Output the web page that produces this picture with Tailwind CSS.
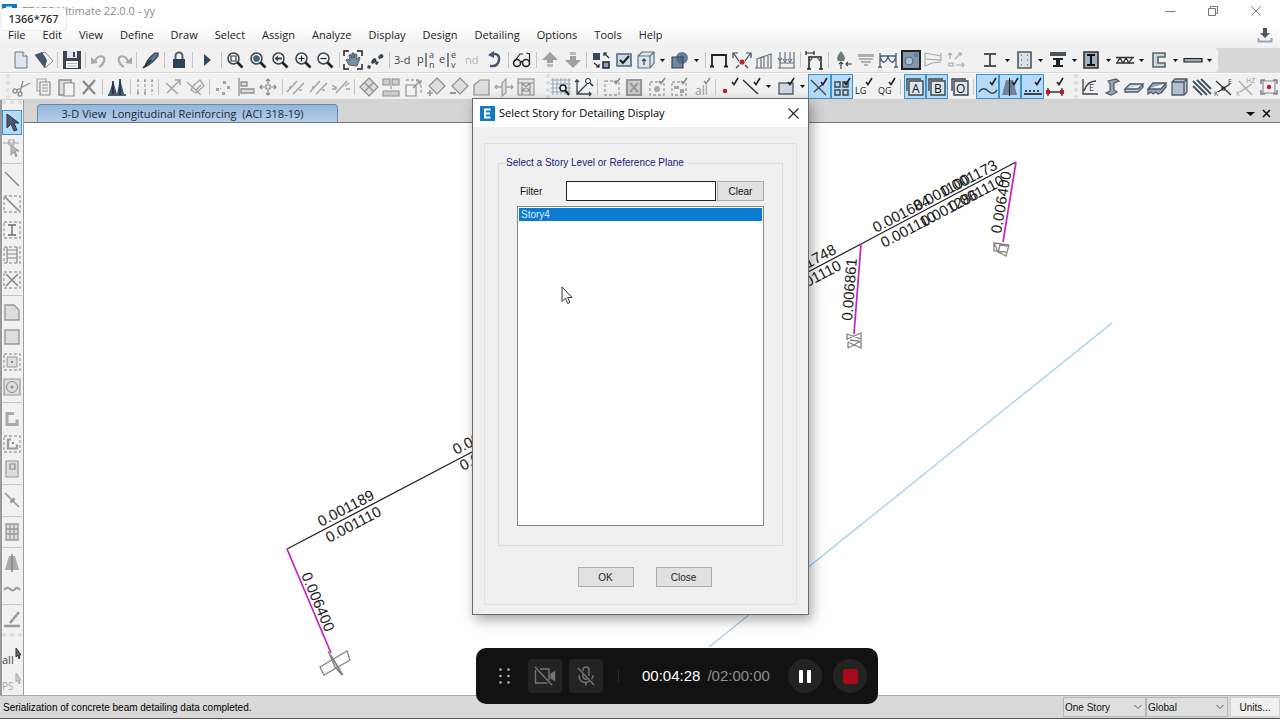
<!DOCTYPE html>
<html lang="en">
<head>
  <meta charset="UTF-8" />
  <meta name="viewport" content="width=device-width, initial-scale=1.0"/>
  <title>ETABS Ultimate 22.0.0 - yy</title>
  <script src="https://cdn.jsdelivr.net/npm/@tailwindcss/browser@4"></script>
</head>
<body class="relative h-screen flex flex-col overflow-hidden bg-white text-[#222] font-['Open_Sans','Noto_Sans',sans-serif] text-[11px]">

  <!-- Title bar and menu -->
  <header class="bg-linear-to-b from-white from-50% to-[#f0f0f0]">
    <div class="flex items-center h-[22px] pl-[2px]">
      <svg class="w-[15px] h-[15px]" viewBox="0 0 15 15"><path d="M0 0h15v15H0z" fill="#0f7ac4"/><path d="M10 3.500H5v8h5M5 7.500h4" stroke="#fff" stroke-width="2" fill="none"/></svg>
      <h1 class="pl-[5px] text-[#8b8b8b]">ETABS Ultimate 22.0.0 - yy</h1>
      <div class="ml-auto mr-[3px] flex text-[#777]">
        <button aria-label="Minimize" class="w-[43px] h-[20px] flex items-center justify-center"><svg class="w-[10px] h-[10px]" viewBox="0 0 10 10"><path d="M0 5.500h10" stroke="currentColor"/></svg></button>
        <button aria-label="Restore" class="w-[43px] h-[20px] flex items-center justify-center"><svg class="w-[10px] h-[10px]" viewBox="0 0 10 10" fill="none" stroke="currentColor"><path d="M.5 2.500h7v7h-7zM2.500 2V.5h7v7H8"/></svg></button>
        <button aria-label="Close window" class="w-[43px] h-[20px] flex items-center justify-center"><svg class="w-[10px] h-[10px]" viewBox="0 0 10 10"><path d="M.5.5l9 9M9.500.5l-9 9" stroke="currentColor"/></svg></button>
      </div>
    </div>
    <div class="flex items-center h-[26px] pl-[8px] pr-[7px]">
      <nav id="menu" class="flex gap-[17px] leading-[16px]"></nav>
      <button aria-label="Download" class="ml-auto"><svg class="w-[16px] h-[16px]" viewBox="0 0 16 16"><path d="M6 1h4v5h3L8 11 3 6h3z" fill="#4a5866"/><path d="M1.500 11v3.500h13V11" fill="none" stroke="#9aa7b3" stroke-width="2"/></svg></button>
    </div>
  </header>

  <!-- Toolbars -->
  <div class="flex h-[26px] bg-[#d7d7d7] border-b border-[#fafafa]">
    <div class="grow-[977] basis-0 min-w-0 flex bg-[#f1f1f1] pl-[10px] pr-[8px] border-b border-[#d9d9d9]">
      <div data-bar="main" class="grow flex"></div>
      <div class="w-[4px]"></div>
    </div>
    <div class="grow-[240] basis-0 min-w-0 flex bg-[#f1f1f1] rounded-r-sm pr-[3px] border-b border-[#d9d9d9]">
      <div data-bar="design" class="grow flex"></div>
    </div>
    <div class="grow-[63] basis-0"></div>
  </div>
  <div class="flex h-[26px] bg-[#f1f1f1] border-b border-[#d0d0d0]">
    <div class="shrink-0 w-[10px] border-r-4 border-dotted border-[#e2e2e2]"></div>
    <div data-bar="edit" class="grow-[528] basis-0 min-w-0 flex"></div>
    <div class="shrink-0 w-[13px] border-r-4 border-dotted border-[#dcdcdc]"></div>
    <div data-bar="view" class="grow-[517] basis-0 min-w-0 flex"></div>
    <div class="shrink-0 w-[12px] border-r-4 border-dotted border-[#dcdcdc]"></div>
    <div data-bar="detail" class="grow-[202] basis-0 min-w-0 flex"></div>
  </div>

  <div class="flex grow min-h-0">
    <!-- Drawing tools -->
    <aside class="w-[24px] flex flex-col pr-[1px] bg-[#f1f1f1] border-l-2 border-l-[#9a9a9a] border-r border-r-[#9c9c9c]">
      <div class="h-[10px] border-t-4 border-dotted border-[#dcdcdc]"></div>
      <div data-bar="draw" class="grow-[83] basis-0 min-h-0 flex flex-col"></div>
      <div class="h-[12px] border-t-4 border-dotted border-[#dcdcdc]"></div>
      <div data-bar="pick" class="grow-[8] basis-0 min-h-0 flex flex-col"></div>
    </aside>

    <main class="grow min-w-0 flex flex-col">
      <div class="h-[23px] flex items-end bg-[#d4d4d4] border-b border-[#777] pl-[13px] pr-[9px]">
        <button class="w-[301px] h-[18px] pr-[10px] rounded-t-[4px] border border-b-0 border-[#6f86a0] bg-linear-to-b from-[#93b5da] to-[#b4cfec] text-[#1b2733] leading-[16px] whitespace-pre">3-D View  Longitudinal Reinforcing  (ACI 318-19)</button>
        <button aria-label="Window list" class="ml-auto mb-[4px]"><svg class="w-[9px] h-[9px]" viewBox="0 0 9 9"><path d="M0 3h9L4.500 7z" fill="#111"/></svg></button>
        <button aria-label="Close view" class="ml-[7px] mb-[4px]"><svg class="w-[9px] h-[9px]" viewBox="0 0 9 9"><path d="M1 1l7 7M8 1L1 8" stroke="#111" stroke-width="1.600"/></svg></button>
      </div>

      <!-- Model view -->
      <div class="grow min-h-0 overflow-hidden bg-white">
        <svg class="w-full h-full" viewBox="24 123 1256 572" preserveAspectRatio="xMinYMin slice" fill="none">
          <path d="M1112 323L709 647" stroke="#9ccbea" stroke-width="1.200"/>
          <path d="M287 549L472 452M808 272L861 244L1016 162" stroke="#222" stroke-width="1.300"/>
          <path d="M287 549L331 653M861 244L854 334M1016 162L1003 242" stroke="#c81ec8" stroke-width="1.700"/>
          <g stroke="#858585" stroke-width="1.300">
            <path d="M320 667l27-16 3 9-26 15zM328 651l14 24-7-8zM331 655l12 20"/>
            <path d="M847 334l14 5v-6l-14 6zM847 334v6M861 333v13M848 348l13-7M848 342l13 6v-7M848 342v6M850 340l9 1"/>
            <path d="M994 243l15 2-3 11-8-4zM994 243v8l12 1M998 253l2-8 9 1"/>
          </g>
          <g id="labels" fill="#1a1a1a" font-family="Liberation Sans, sans-serif" font-size="15"></g>
        </svg>
      </div>
    </main>
  </div>

  <!-- Status bar -->
  <footer class="flex items-center h-[25px] pb-[2px] bg-[#d9d9d9] border-t border-[#a8a8a8] font-['Liberation_Sans',sans-serif] text-[10px]">
    <p class="pl-[3px] text-black">Serialization of concrete beam detailing data completed.</p>
    <div class="ml-auto flex h-[20px] text-[#111]">
      <label class="relative flex" aria-label="Story mode">
        <select class="appearance-none w-[83px] pl-[1px] border border-[#b5b5b5] bg-[#dfdfdf]"><option>One Story</option></select>
        <svg class="absolute right-[4px] top-[7px] w-[8px] h-[6px]" viewBox="0 0 8 6"><path d="M.5 1L4 4.500 7.500 1" fill="none" stroke="#555"/></svg>
      </label>
      <label class="relative flex" aria-label="Coordinate system">
        <select class="appearance-none w-[82px] pl-[1px] border border-[#b5b5b5] bg-[#dfdfdf]"><option>Global</option></select>
        <svg class="absolute right-[4px] top-[7px] w-[8px] h-[6px]" viewBox="0 0 8 6"><path d="M.5 1L4 4.500 7.500 1" fill="none" stroke="#555"/></svg>
      </label>
      <button class="w-[50px] ml-[2px] bg-[#f0f0f0] border border-[#d0d0d0]">Units...</button>
    </div>
  </footer>
  <div class="h-[2px] border-t border-[#555] bg-white -mt-[2px]"></div>

  <!-- Story dialog -->
  <section role="dialog" aria-labelledby="dlg-title" class="absolute left-[472px] top-[98px] w-[337px] border border-[#686c70] bg-[#f0f0f0] shadow-[3px_5px_12px_rgba(0,0,0,0.35)]">
    <div class="flex items-center h-[28px] bg-white pl-[7px] pr-[9px]">
      <svg class="w-[15px] h-[15px]" viewBox="0 0 15 15"><path d="M0 0h15v15H0z" fill="#1279c6"/><path d="M10.500 3.500H5v8h5.500M5 7.500h5" stroke="#fff" stroke-width="2" fill="none"/></svg>
      <h2 id="dlg-title" class="pl-[4px] text-black">Select Story for Detailing Display</h2>
      <button aria-label="Close dialog" class="ml-auto"><svg class="w-[11px] h-[11px]" viewBox="0 0 11 11"><path d="M.5.5l10 10M10.500.5l-10 10" stroke="#222" stroke-width="1.100"/></svg></button>
    </div>
    <div class="mt-[16px] mx-[11px] mb-[9px] px-[13px] pt-[11px] pb-[17px] border border-[#e2e2e2] font-['Liberation_Sans',sans-serif] text-[10px]">
      <fieldset class="border border-[#dcdcdc] px-[18px] pt-[10px] pb-[19px]">
        <legend class="-ml-[12px] pl-[1px] pr-[4px] leading-[16px] text-[#1a1a80]">Select a Story Level or Reference Plane</legend>
        <div class="flex items-center h-[20px] text-[#111]">
          <label for="filter" class="w-[49px] pl-[3px]">Filter</label>
          <input id="filter" type="text" class="grow min-w-0 h-[20px] px-[3px] bg-white border border-[#222]" />
          <button id="clear" class="w-[47px] h-[20px] ml-[1px] bg-[#e1e1e1] border border-[#adadad]">Clear</button>
        </div>
        <ul role="listbox" aria-label="Stories" class="mt-[5px] h-[320px] p-[1px] bg-white border border-[#82878c]">
          <li role="option" aria-selected="true" class="h-[13px] pl-[2px] leading-[13px] bg-[#0b7ad1] text-[#dceeff]">Story4</li>
        </ul>
      </fieldset>
      <div class="flex justify-center gap-[22px] mt-[21px] pl-[8px]">
        <button class="w-[56px] h-[20px] bg-[#e1e1e1] border border-[#adadad]">OK</button>
        <button class="w-[56px] h-[20px] bg-[#e1e1e1] border border-[#adadad]">Close</button>
      </div>
    </div>
  </section>

  <!-- Recorder overlay -->
  <section aria-label="Recorder" class="absolute left-[476px] top-[648px] w-[402px] h-[56px] flex items-center pl-[23px] pr-[11px] rounded-[10px] bg-[#121212] font-['Liberation_Sans',sans-serif] text-[15px]">
    <svg class="w-[11px] h-[16px]" viewBox="0 0 11 16" fill="#b0b0b0"><circle cx="1.500" cy="1.500" r="1.300"/><circle cx="9.500" cy="1.500" r="1.300"/><circle cx="1.500" cy="8" r="1.300"/><circle cx="9.500" cy="8" r="1.300"/><circle cx="1.500" cy="14.500" r="1.300"/><circle cx="9.500" cy="14.500" r="1.300"/></svg>
    <button aria-label="Camera off" class="ml-[18px] w-[34px] h-[34px] rounded-[4px] bg-[#232323] flex items-center justify-center">
      <svg class="w-[22px] h-[20px]" viewBox="0 0 22 20" fill="none" stroke="#757575" stroke-width="1.400"><path d="M6 3h9v11M13.500 17H1.500V4M1 1l17 18"/><path d="M17 8l3.500-2v8L17 12z" fill="#757575"/></svg>
    </button>
    <button aria-label="Microphone off" class="ml-[7px] w-[34px] h-[34px] rounded-[4px] bg-[#232323] flex items-center justify-center">
      <svg class="w-[18px] h-[20px]" viewBox="0 0 18 20" fill="none" stroke="#757575" stroke-width="1.400"><path d="M6 5V4a3 3 0 0 1 6 0v6M6 7v3a3 3 0 0 0 4 3M2 9c0 9 8 8 10 6M16 9c0 2-.5 3-1.500 4M9 16v3.500M1 2l16 17"/></svg>
    </button>
    <span class="ml-[15px] w-[1px] h-[12px] bg-[#2a2a2a]"></span>
    <span class="ml-[23px] text-white">00:04:28</span>
    <span class="ml-[7px] text-[#8f8f8f]">/02:00:00</span>
    <button aria-label="Pause" class="ml-auto w-[34px] h-[34px] rounded-full bg-[#232323] flex items-center justify-center gap-[4px]">
      <span class="w-[4px] h-[13px] rounded-[1px] bg-white"></span><span class="w-[4px] h-[13px] rounded-[1px] bg-white"></span>
    </button>
    <button aria-label="Stop" class="ml-[11px] w-[34px] h-[34px] rounded-full bg-[#232323] flex items-center justify-center">
      <span class="w-[15px] h-[15px] rounded-[3px] bg-[#a80b1c]"></span>
    </button>
  </section>

  <div class="absolute left-[1px] top-[8px] w-[65px] h-[22px] rounded-[4px] bg-white shadow-[0_0_2px_rgba(0,0,0,0.25)] text-center leading-[22px] text-[11px] font-semibold text-[#333]">1366*767</div>

  <!-- Mouse pointer -->
  <svg class="absolute left-[561px] top-[286px] w-[12px] h-[19px]" viewBox="0 0 12 19"><path d="M1 1v14.500l3.400-3.200 2.300 5.200 2.200-1-2.300-5h4.400z" fill="#fff" stroke="#333"/></svg>

  <script>
    const menu = ["File", "Edit", "View", "Define", "Draw", "Select", "Assign", "Analyze", "Display", "Design", "Detailing", "Options", "Tools", "Help"];

    // text, x, y, angle
    const labels = [
      ["0.001189", 321, 527, -27.700], ["0.001110", 329, 543, -27.700],
      ["0.001110", 456, 455, -27.700], ["0.001110", 463, 471, -27.700],
      ["0.001748", 782, 282, -27.700], ["0.001110", 789, 297, -27.700],
      ["0.001684", 876, 233, -27.700], ["0.001100", 917, 211, -27.700], ["0.001173", 944, 197, -27.700],
      ["0.001110", 884, 248, -27.700], ["0.001286", 924, 227, -27.700], ["0.001110", 952, 212, -27.700],
      ["0.006861", 852, 321, -85.500], ["0.006400", 1001, 234, -80.500],
      ["0.006400", 301, 575, 67],
    ];

    const D = "#3b434b"; // enabled strokes
    const G = "#a3a3a3"; // disabled strokes
    const tick = `<path d="M12 5l2 2.500L18 1" fill="none" stroke="#222" stroke-width="1.600"/>`;
    const gtick = `<path d="M12 4l2 2.500L18 1" fill="none" stroke="#888" stroke-width="1.500"/>`;
    const s = (d, c = D, w = 1.2, f = "none") => `<path d="${d}" stroke="${c}" stroke-width="${w}" fill="${f}"/>`;
    const p = (d, c = D) => `<path d="${d}" fill="${c}"/>`;
    const t = (x, y, size, str, c = D) => `<text x="${x}" y="${y}" font-size="${size}" fill="${c}">${str}</text>`;
    const dash = (d, c = G) => `<path d="${d}" stroke="${c}" stroke-width="1.300" stroke-dasharray="3 2" fill="none"/>`;
    const lens = inner => `<circle cx="8.500" cy="8.500" r="5.500" fill="#eef3f7" stroke="${D}" stroke-width="1.500"/>` + s("M12.500 12.500l5 5", "#222", 2.6) + inner;

    const icons = {
      new: s("M4 2h8l4 4v12H4z", "#667482", 1, "#dce6f0") + s("M12 2v4h4", "#667482", 1, "#fff"),
      open: s("M1 5l10-3 8 9-8 7z", "#7c8792", 1, "#f4f7fa") + p("M1 5l7-3 5 8-2 8z", "#43566b"),
      save: p("M1 1h18v18H1z", "#3e454d") + p("M5 1h10v7H5z", "#dfe6ec") + p("M11 2h2v5h-2z") + p("M4 11h12v7H4z", "#f3f5f7") + s("M5 13.500h10M5 16h10", "#b0b8c0", 1),
      undo: s("M5 12C7 4 16 5 14 11q-1 4-5 6", "#aaa", 2.2) + p("M1 7l7 6-7 1z", "#aaa"),
      redo: s("M15 12C13 4 4 5 6 11q1 4 5 6", "#aaa", 2.2) + p("M19 7l-7 6 7 1z", "#aaa"),
      pen: s("M4 17Q5 10 14 3l3 0v3Q11 14 4 17z", "#2c3e50", 1.2, "#5a7187") + s("M2 18l8-8", "#222", 1.5),
      lock: s("M6.500 9V6a3.500 3.500 0 0 1 7 0v3", "#555d66", 2) + p("M4 9h12v9H4z", "#2f4257"),
      run: p("M7 4l7 6-7 6z", "#34495e"),
      zbox: lens(s("M6 6h5v5H6z")), zfull: lens(`<circle cx="8.500" cy="8.500" r="3.300" fill="#44617f"/>`),
      zprev: lens(p("M4.500 8.500L8 5.500v2h4v2H8v2z")), zin: lens(s("M5.500 8.500h6M8.500 5.500v6", "#222")), zout: lens(s("M5.500 8.500h6", "#222")),
      pan: s("M1 6V1h5M14 1h5v5M19 14v5h-5M6 19H1v-5", "#222", 1.5) + s("M6 15L3 10l2-1 2 2-1-6 2-.5 1 4V3h2v5l1-4 2 .5-.5 5L16 7l1 1-3 8z", "#34495e", .8, "#7a8fa4"),
      walk: p("M5 12q3-6 5-3t-4 5zM12 7q3-5 5-2t-4 4z") + p("M2 15l3 1-1 3-3-1zM10 11l3 1-2 3-2-1z"),
      d3: t(0, 14, 11, "3-d"),
      plan: t(0, 13, 11, "p") + s("M9 3v14") + t(12, 8, 9, "a") + t(12, 18, 9, "n"),
      elev: t(0, 13, 11, "e") + s("M9 3v14") + t(12, 8, 9, "e") + t(12, 18, 9, "v"),
      nd: t(3, 14, 11, "nd", "#b5b5b5"),
      rot: s("M7 4q9-1 8 6t-9 6", "#44566a", 2.4) + p("M4 5l6-4v7z", "#44566a"),
      glasses: `<circle cx="5" cy="13" r="3.500" fill="none" stroke="#222" stroke-width="1.500"/><circle cx="14" cy="13" r="3.500" fill="none" stroke="#222" stroke-width="1.500"/>` + s("M8.500 12q1-1 2 0M2 12L8 4h3M17.500 12V4l-3-1", "#222"),
      up: p("M10 2l8 8h-5v3H7v-3H2z", "#a0a0a0") + p("M7 14h6v3H7z", "#bbb"), down: p("M7 2h6v3H7z", "#bbb") + p("M7 6h6v4h5l-8 8-8-8h5z", "#a0a0a0"),
      shrink: p("M2 3h7v7H2z", "#34495e") + s("M12 12h6v6h-6z", "#222", 1.5, "#8da2b8") + s("M18 8l-5-5m0 3V3h3M3 13l5 4m0-3v3H5", "#222", 1.1),
      check: s("M3 4h14v12H3z", "#566778", 1.6, "#cbd9e6") + s("M6 10l3 3 6-7", "#222", 2.2),
      cube: s("M2 6l4-4h12v11l-4 5H2zM2 6h12v12M14 6l4-4", "#66717c", 1.2, "#dbe5ee") + s("M8 15V9M6 11l2-2 2 2"),
      solid: p("M2 7h11v11H2z", "#70879e") + `<circle cx="12" cy="8" r="6" fill="#4d6a88" opacity=".85"/>` + s("M2 7h11v11H2z"),
      frame: s("M1 16.500h4M3 16V5h14v11M15 16.500h4", "#222", 1.8), react: s("M2 4l5 7M18 4l-5 7M1 8V3h5M14 3h5v5M7 15l-3 3M13 15l3 3", D) + `<circle cx="10" cy="12" r="2.600" fill="#c02030"/>`,
      load1: s("M1 18h17M3 18V9L17 4v14M7 8v10M10 7v10M14 6v11", "#65717d"), load2: s("M1 18h17M3 10v8M17 10v8M3 2v9M8 2v8M13 2v8M17 2v8M1 8l2 3 2-3M6 9l2 3 2-3M11 9l2 3 2-3M3 13h14", "#65717d"),
      bridge: s("M4 19V7h12v12M2 19h4M14 19h4", "#222", 1.6) + s("M1 3h8M1 1v4M9 1v4", "#222", 1.2) + s("M4 12l4-5M16 12l-4-5", "#667", 1.6),
      drop: p("M8 1q6 7 3 10H5Q2 8 8 1z", "#6b7f78") + s("M8 12v7M6 14l2-2 2 2M19 14h-6m2-2l-2 2 2 2"),
      strip: p("M2 4h16v3H2zM3 8h14v2H3zM5 11h10v2H5zM8 14h4v2H8z", "#b0b0b0"), moment: s("M2 3v14M18 3v14M2 6h16M2 6q3 12 8 1q5 11 8-1M0 17h4M16 17h4", "#45607a", 1.3),
      contour: p("M0 0h20v20H0z", "#222") + p("M2 2h16v16H2z", "#8397aa") + `<circle cx="8" cy="11" r="4" fill="#a9bccd" stroke="#51677c"/><circle cx="15" cy="5" r="2" fill="#5d7a96"/>`,
      diag1: s("M2 3l16 3M2 3v6l16 1V3M2 10v6l7-3 9-1", "#aaa", 1.2), diag2: s("M4 9V3M2 5l2-2 2 2M9 9l6-6M12 3h3v3M3 13h4v3H3zM10 15h8M16 13l2 2-2 2", "#aaa"),
      steel: p("M4 3h12v2h-5v10h5v2H4v-2h5V5H4z", "#555"), conc: s("M4 2h13v16H4z", "#555", 1.6, "#d8e2ea") + s("M7 5h1M13 5h1M7 15h1M13 15h1M7 10h1M13 10h1"),
      comp: p("M2 2h16v4H2z", "#4a545e") + p("M5 8h10v2h-3v5h3v2H5v-2h3v-5H5z", "#222"), encase: s("M3 2h14v16H3z", "#333", 1.6, "#9fb0bf") + p("M6 4h8v2h-3v8h3v2H6v-2h3V6H6z", "#111"),
      joist: s("M1 7.500h18M1 13h18M2 13l3-5 3 5 3-5 3 5 3-5", "#333", 1.3), wall: s("M16 3H4v14h12v-4H9V7h7z", "#566", 1.6, "#cbd6df"), slab: s("M1 8.500h18v3.500H1z", "#222", 1.2, "#9aaaba"),

      cut: s("M2 14a2 2 0 1 0 4 0a2 2 0 1 0-4 0M7 17a2 2 0 1 0 4 0a2 2 0 1 0-4 0M6 13l13-7M9 15l3-11", "#8e8e8e", 1.3), copy: s("M3 2h9v12H3z", G, 1.2, "#eee") + s("M6 5h10v13H6zM8 8h6M8 11h6M8 14h6", "#8e8e8e", 1.2, "#eee"),
      paste: s("M3 3h12v15H3z", "#8e8e8e", 1.5, "#ddd") + s("M8 6h10v13H8z", "#8e8e8e", 1.2, "#f4f4f4"), del: s("M4 4l12 13M16 3L4 17", "#888", 2.2),
      tower: p("M2 17l4-13 4 13zM10 17l3-15 4 15z", "#3d5a78") + s("M1 18h18M6 4v13M13 2v16", "#1e2b38", 1.5), cols: dash("M3 2v16M10 2v16M17 2v16") + p("M2 3h2v2H2zM9 3h2v2H9zM16 3h2v2h-2zM2 15h2v2H2zM9 15h2v2H9z", G),
      diag: s("M3 6l12 11M4 16L17 3M12 3h5v5", G, 1.4), skew: s("M9 8l6-5 4 6-8 7-5-3zM2 5l14 13M11 13l5-5", G, 1.3),
      pts: p("M3 11h3v3H3zM10 4h3v3h-3zM9 15h3v3H9zM14 9h3v3h-3zM7 11h1v1H7z", G), align: s("M3 1v18M5 5h6v4H5zM5 12h13v4H5z", "#8e8e8e", 1.3, "#ddd"),
      move: s("M10 2v5M8 4l2-2 2 2M10 13v5M8 16l2 2 2-2M2 10h5M4 8l-2 2 2 2M13 10h5M16 8l2 2-2 2M8 8h4v4H8z", "#888", 1.2), par: s("M1 15L11 4M7 17L18 6M3 10h2M13 13h3", G, 1.5), par2: s("M1 8l4 3M14 9l4-3M5 16L16 4M1 12h4v-3M15 12h4", G, 1.3),
      quad: s("M10 1l9 9-9 9-9-9zM5 5l10 10M15 5L5 15", "#8e8e8e", 1.2, "#ddd"), rows: s("M2 2h7v6H2zM11 2h7v6h-7zM2 14h16v5H2zM10 9v3", "#8e8e8e", 1.1, "#ccc"),
      scale: dash("M2 3h15v15") + s("M2 8h10v11H2zM9 11l7-7M12 4h4v4", "#8e8e8e", 1.2), addq: s("M11 1l8 8-8 8-8-8z", "#8e8e8e", 1.2, "#ddd") + s("M4 13v6M1 16h6", "#777"), subq: s("M11 1l8 8-8 8-8-8z", "#8e8e8e", 1.2, "#ddd") + s("M1 16h6", "#777", 1.5),
      chamf: s("M3 18V8l6-5h9v15z", "#8e8e8e", 1.2, "#ddd"), mirror: s("M8 6l4-4v14l-4 3zM1 10h7M3 8l-2 2 2 2M12 10h7M17 8l2 2-2 2", G, 1.3, "#ddd"), open2: s("M2 2h16v16H2zM6 6h8v8H6zM2 6h4M14 6h4M6 14v4M14 14v4M6 6l8 8M14 6l-8 8", "#8e8e8e", 1.1, "#e4e4e4"),
      grid: s("M2 1v17M6 1v17M10 1v17M14 1v17M18 1v17M0 3h20M0 7h20M0 11h20M0 15h20", "#8fa7bf", 1) + `<circle cx="12" cy="11" r="3" fill="#fff" stroke="#222" stroke-width="1.500"/>` + s("M14 13l4 5", "#222", 2.2),
      axes: s("M3 3v14h14M3 17L13 7M1 5l2-2 2 2M15 15l2 2-2 2", D, 1.3) + `<circle cx="14" cy="4" r="2.500" fill="#fff" stroke="#222"/>` + s("M16 6l3 3", "#222", 1.5),
      selbox: dash("M3 4h14v14H3z") + gtick, selx: s("M3 3h14v15H3zM6 6l8 9M14 6l-8 9", "#999", 2.2, "#ccc"), seldot: dash("M3 5h14v13H3z") + `<circle cx="10" cy="12" r="3" fill="#aaa"/>` + gtick,
      selgrp: dash("M3 5h14v13H3z") + p("M5 9h5v3H5zM11 12h4v4h-4z", G) + gtick, selall: t(3, 18, 12, "all", "#999") + gtick,
      snap: `<circle cx="5" cy="14" r="2.200" fill="#c01828"/>` + tick, snapline: s("M1 3l15 14", "#333", 1.5) + tick, snapbox: s("M3 6h14v11H3z", "#566", 1.4, "#ccd8e2") + tick,
      snapx: s("M2 3l15 15M5 15l9-8", D, 1.3) + tick, snapgrid: s("M3 5h5v5H3zM11 5h5v5h-5zM3 13h5v5H3zM11 13h5v5h-5z", D, 1.4) + tick, lg: t(1, 17, 9, "LG", "#222") + tick, qg: t(1, 17, 9, "QG", "#222") + tick,
      la: s("M2 14V2h14M4 4h14v14H4z", D, 1.4, "#dbe6ef") + t(7, 16, 12, "A", "#111"), lb: s("M2 14V2h14M4 4h14v14H4z", D, 1.4, "#dbe6ef") + t(7, 16, 12, "B", "#111"), lo: s("M2 14V2h14M4 4h14v14H4z", D, 1.4, "#dbe6ef") + t(6, 16, 12, "O", "#111"),
      wave: s("M1 15q4-6 9-1t9-1", D, 1.5) + tick, dam: p("M6 3h7l4 15H2z", "#70839a") + s("M9.500 1v18", "#222", 1, "none") + tick, teeth: s("M1 17h18", D, 2) + s("M3 15v-2M7 15v-2M11 15v-2M15 15v-2", D, 2) + tick, link: s("M3 15h14M3 11v8M17 11v8", "#333", 1.3) + p("M1 13h4v4H1zM15 13h4v4h-4z", "#c01828") + tick,
      ecurve: s("M3 2v15h15M4 14Q7 4 16 4", D, 1.3) + t(9, 14, 9, "E"), beam: s("M6 4l8-2 3 2-5 2v7l3 2-6 3-5-2 4-2V7z", "#4c5a68", 1.2, "#93a5b7"), plate: s("M1 12l5-5h13l-5 5zM1 12v3h13l5-5V7", "#4c5a68", 1.3, "#c4cfda"), deck: s("M1 12l5-6h13l-5 6zM1 12v5l3-2 2 2 3-2 2 2 3-1 5-6V6", "#4c5a68", 1.3, "#93a5b7"), wall3: s("M3 5l3-3h12v13l-3 3H3zM3 5h12v13M15 5l3-3", "#4c5a68", 1.3, "#b0c0cf"),
      rebar: s("M1 4l14 14M5 3l14 14M9 2l10 10M1 9l9 9", "#42505e", 1.8), ke: s("M2 4l15 14M16 7L4 15M8 10h3v3H8z", "#333", 1.2) + t(14, 7, 7, "E") + t(0, 19, 7, "K"), kh: s("M3 4l13 14M16 7L4 15", "#aaa", 1.4) + t(10, 6, 7, "HZ", "#999") + t(0, 19, 7, "K", "#999"), node: s("M4 4h12v12H4z", "#889", 1.1) + s("M2 7V3h4M14 3h4v4M18 13v4h-4M6 17H2v-4", "#556", 1.1) + `<circle cx="10" cy="10" r="2.200" fill="#c01828"/>`,

      arrow: s("M5 1v14l4-4 3 7 3-1-3-7h5z", "#2c3946", 1, "#49596b"), reshape: s("M1 5h16M7 2h5v5H7z", G) + s("M9 7v10l3-3 2 5 1-1-2-5h4z", "#999", 1, "#bbb"),
      line: s("M3 3l14 14", "#8f8f8f", 1.6), bline: dash("M2 2h16v16H2z") + s("M3 3l14 14", "#888", 1.6), bcol: dash("M2 2h16v16H2z") + s("M6 5h8M10 5v10M6 15h8", "#888", 1.8), bsec: dash("M2 2h16v16H2z") + s("M5 2v16M15 2v16M5 5h10M5 9h10M5 13h10", "#888"), bx: dash("M2 2h16v16H2z") + s("M4 4l12 12M16 4L4 16", "#888", 1.6),
      poly: s("M3 3h9l5 5v10H3z", "#999", 1.4, "#ddd"), rect: s("M3 3h14v14H3z", "#999", 1.4, "#ddd"), rectd: dash("M2 2h16v16H2z") + s("M5 5h10v10H5z", "#999", 1, "#ddd") + p("M9 9h2v2H9z", "#888"), circ: s("M2 2h16v16H2z", "#999", 1.2, "#ddd") + `<circle cx="10" cy="10" r="5.500" fill="none" stroke="#888"/><circle cx="10" cy="10" r="1.500" fill="#888"/>`,
      walll: s("M12 4.500H5v11h10v-5", "#aaa", 3), wallb: dash("M2 2h16v16H2z") + s("M9 5.500H6v9h9v-4", "#999", 2.2) + p("M10 8h2v2h-2z", "#888"), door: s("M4 2h12v16H4z", "#999", 1.2, "#ddd") + s("M8 5h5v5H8z", "#888"),
      linkd: s("M3 3l14 14M8 12l4-4M9 13l4-4", "#999", 1.6), tbl: s("M4 2h12v16H4zM4 7h12M4 12h12M8 2v16M12 2v16", "#999", 1.3, "#ddd"), cone: p("M7 3h6l4 14H3z", "#aaa") + s("M10 1v18", "#777"), wavy: s("M2 11q3-4 6-1t5 0t5 1", "#999", 2), trowel: s("M8 13L17 2M2 16h16", "#999", 2.5), allp: t(0, 17, 11, "all") + s("M14 1v9l2-2 1 4 1-1-1-3h2z", "#333", 1, "#667"), ps: t(0, 18, 10, "PS", "#aaa") + s("M14 1v9l2-2 1 4 1-1-1-3h2z", "#aaa", 1, "#ccc"),
    };

    // "|" is a separator, "v" a drop-down arrow, "*" marks a tool that is switched on
    const bars = {
      main: "new open | save | undo redo | pen | lock | run | zbox zfull zprev zin zout | pan walk | d3 plan elev nd rot | glasses | up down | shrink check cube v solid v | frame react load1 load2 | bridge | drop strip moment contour diag1 diag2",
      design: "steel v conc v comp v encase v joist v wall v slab v",
      edit: "cut copy paste del | tower | cols | diag skew | pts align move | par par par2 | quad rows scale addq subq chamf mirror open2",
      view: "grid axes | selbox selx seldot selgrp selall | snap snapline v snapbox v *snapx *snapgrid lg qg | *la *lb lo | *wave *dam *teeth link",
      detail: "ecurve beam plate deck wall3 rebar ke kh node",
      draw: "*arrow reshape | line bline bcol bsec bx | poly rect rectd circ | walll wallb door | linkd | tbl | cone wavy | trowel",
      pick: "allp ps",
    };

    for (const name of menu) {
      document.getElementById("menu").insertAdjacentHTML("beforeend", `<a href="#" class="text-[#222]">${name}</a>`);
    }

    document.getElementById("labels").innerHTML = labels
      .map(([str, x, y, a]) => `<text x="${x}" y="${y}" transform="rotate(${a} ${x} ${y})">${str}</text>`).join("");

    document.querySelectorAll("[data-bar]").forEach(bar => {
      const vertical = bar.classList.contains("flex-col");
      bar.innerHTML = bars[bar.dataset.bar].split(" ").map(item => {
        if (item === "|") {
          return vertical
            ? `<span class="grow basis-0 min-h-0 flex items-center"><span class="w-full h-[1px] bg-[#c4c4c4]"></span></span>`
            : `<span class="grow basis-0 min-w-0 flex items-center justify-center"><span class="w-[1px] h-[16px] bg-[#c4c4c4]"></span></span>`;
        }
        if (item === "v") {
          return `<button aria-label="More" class="grow-[2] basis-0 min-w-0 flex items-center justify-center"><svg class="w-[5px] h-[3px]" viewBox="0 0 5 3"><path d="M0 0h5L2.500 3z" fill="#111"/></svg></button>`;
        }
        const on = item[0] === "*";
        const name = on ? item.slice(1) : item;
        return `<button aria-label="${name}" class="grow-[4] basis-0 min-w-0 min-h-0 flex items-center justify-center ${on ? "bg-[#b5daf5] outline -outline-offset-1 outline-[#3b93d0]" : ""}"><svg class="shrink-0 w-[20px] h-[20px] overflow-visible" viewBox="0 0 20 20" font-family="Open Sans, sans-serif">${icons[name]}</svg></button>`;
      }).join("");
    });

    document.getElementById("clear").addEventListener("click", () => {
      document.getElementById("filter").value = "";
    });
  </script>
</body>
</html>
